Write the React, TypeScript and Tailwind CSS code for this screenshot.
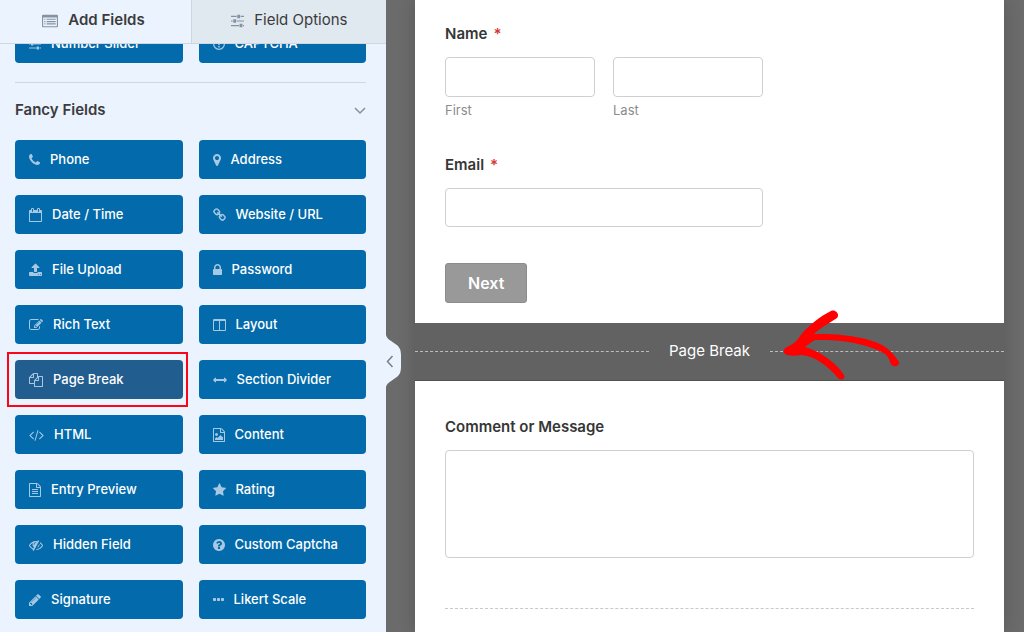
import React from "react";

type Glyph = { d: string; advance: number };

const DOT = "v192q0 40-28 68t-68 28h-192q-40 0-68-28t-28-68v-192q0-40 28-68t68-28h192q40 0 68 28t28 68z";

const glyphs = {
  phone: {
    advance: 1408,
    d: "M1600 1240q0 27-10 70.5t-21 68.5q-21 50-122 106-94 51-186 51-27 0-53-3.5t-57.5-12.5-47-14.5-55.5-20.5-49-18q-98-35-175-83-127-79-264-216t-216-264q-48-77-83-175-3-9-18-49t-20.5-55.5-14.5-47-12.5-57.5-3.5-53q0-92 51-186 56-101 106-122 25-11 68.5-21t70.5-10q14 0 21 3 18 6 53 76 11 19 30 54t35 63.5 31 53.5q3 4 17.5 25t21.5 35.5 7 28.5q0 20-28.5 50t-62 55-62 53-28.5 46q0 9 5 22.5t8.5 20.5 14 24 11.5 19q76 137 174 235t235 174q2 1 19 11.5t24 14 20.5 8.5 22.5 5q18 0 46-28.5t53-62 55-62 50-28.5q14 0 28.5 7t35.5 21.5 25 17.5q25 15 53.5 31t63.5 35 54 30q70 35 76 53 3 7 3 21z",
  },
  marker: {
    advance: 1024,
    d: "M1152 640q0-106-75-181t-181-75-181 75-75 181 75 181 181 75 181-75 75-181zm256 0q0 109-33 179l-364 774q-16 33-47.5 52t-67.5 19-67.5-19-46.5-52l-365-774q-33-70-33-179 0-212 150-362t362-150 362 150 150 362z",
  },
  calendar: {
    advance: 1664,
    d: "M192 1664h1408v-1024h-1408v1024zm384-1216v-288q0-14-9-23t-23-9h-64q-14 0-23 9t-9 23v288q0 14 9 23t23 9h64q14 0 23-9t9-23zm768 0v-288q0-14-9-23t-23-9h-64q-14 0-23 9t-9 23v288q0 14 9 23t23 9h64q14 0 23-9t9-23zm384-64v1280q0 52-38 90t-90 38h-1408q-52 0-90-38t-38-90v-1280q0-52 38-90t90-38h128v-96q0-66 47-113t113-47h64q66 0 113 47t47 113v96h384v-96q0-66 47-113t113-47h64q66 0 113 47t47 113v96h128q52 0 90 38t38 90z",
  },
  link: {
    advance: 1664,
    d: "M1520 1216q0-40-28-68l-208-208q-28-28-68-28-42 0-72 32 3 3 19 18.5t21.5 21.5 15 19 13 25.5 3.5 27.5q0 40-28 68t-68 28q-15 0-27.5-3.5t-25.5-13-19-15-21.5-21.5-18.5-19q-33 31-33 73 0 40 28 68l206 207q27 27 68 27 40 0 68-26l147-146q28-28 28-67zm-703-705q0-40-28-68l-206-207q-28-28-68-28-39 0-68 27l-147 146q-28 28-28 67 0 40 28 68l208 208q27 27 68 27 42 0 72-31-3-3-19-18.5t-21.5-21.5-15-19-13-25.5-3.5-27.5q0-40 28-68t68-28q15 0 27.5 3.5t25.5 13 19 15 21.5 21.5 18.5 19q33-31 33-73zm895 705q0 120-85 203l-147 146q-83 83-203 83-121 0-204-85l-206-207q-83-83-83-203 0-123 88-209l-88-88q-86 88-208 88-120 0-204-84l-208-208q-84-84-84-204t85-203l147-146q83-83 203-83 121 0 204 85l206 207q83 83 83 203 0 123-88 209l88 88q86-88 208-88 120 0 204 84l208 208q84 84 84 204z",
  },
  upload: {
    advance: 1664,
    d: "M1344 1472q0-26-19-45t-45-19-45 19-19 45 19 45 45 19 45-19 19-45zm256 0q0-26-19-45t-45-19-45 19-19 45 19 45 45 19 45-19 19-45zm128-224v320q0 40-28 68t-68 28h-1472q-40 0-68-28t-28-68v-320q0-40 28-68t68-28h427q21 56 70.5 92t110.5 36h256q61 0 110.5-36t70.5-92h427q40 0 68 28t28 68zm-325-648q-17 40-59 40h-256v448q0 26-19 45t-45 19h-256q-26 0-45-19t-19-45v-448h-256q-42 0-59-40-17-39 14-69l448-448q18-19 45-19t45 19l448 448q31 30 14 69z",
  },
  lock: {
    advance: 1152,
    d: "M640 768h512v-192q0-106-75-181t-181-75-181 75-75 181v192zm832 96v576q0 40-28 68t-68 28h-960q-40 0-68-28t-28-68v-576q0-40 28-68t68-28h32v-192q0-184 132-316t316-132 316 132 132 316v192h32q40 0 68 28t28 68z",
  },
  edit: {
    advance: 1792,
    d: "M888 1184l116-116-152-152-116 116v56h96v96h56zm440-720q-16-16-33 1l-350 350q-17 17-1 33t33-1l350-350q17-17 1-33zm80 594v190q0 119-84.5 203.5t-203.5 84.5h-832q-119 0-203.5-84.5t-84.5-203.5v-832q0-119 84.5-203.5t203.5-84.5h832q63 0 117 25 15 7 18 23 3 17-9 29l-49 49q-14 14-32 8-23-6-45-6h-832q-66 0-113 47t-47 113v832q0 66 47 113t113 47h832q66 0 113-47t47-113v-126q0-13 9-22l64-64q15-15 35-7t20 29zm-96-738l288 288-672 672h-288v-288zm444 132l-92 92-288-288 92-92q28-28 68-28t68 28l152 152q28 28 28 68t-28 68z",
  },
  columns: {
    advance: 1664,
    d: "M224 1536h608v-1152h-640v1120q0 13 9.5 22.5t22.5 9.5zm1376-32v-1120h-640v1152h608q13 0 22.5-9.5t9.5-22.5zm128-1216v1216q0 66-47 113t-113 47h-1344q-66 0-113-47t-47-113v-1216q0-66 47-113t113-47h1344q66 0 113 47t47 113z",
  },
  files: {
    advance: 1792,
    d: "M1696 384q40 0 68 28t28 68v1216q0 40-28 68t-68 28h-960q-40 0-68-28t-28-68v-288h-544q-40 0-68-28t-28-68v-672q0-40 20-88t48-76l408-408q28-28 76-48t88-20h416q40 0 68 28t28 68v328q68-40 128-40h416zm-544 213l-299 299h299v-299zm-640-384l-299 299h299v-299zm196 647l316-316v-416h-384v416q0 40-28 68t-68 28h-416v640h512v-256q0-40 20-88t48-76zm956 804v-1152h-384v416q0 40-28 68t-68 28h-416v640h896z",
  },
  arrows: {
    advance: 1792,
    d: "M1792 896q0 26-19 45l-256 256q-19 19-45 19t-45-19-19-45v-128h-1024v128q0 26-19 45t-45 19-45-19l-256-256q-19-19-19-45t19-45l256-256q19-19 45-19t45 19 19 45v128h1024v-128q0-26 19-45t45-19 45 19l256 256q19 19 19 45z",
  },
  code: {
    advance: 1920,
    d: "M553 1399l-50 50q-10 10-23 10t-23-10l-466-466q-10-10-10-23t10-23l466-466q10-10 23-10t23 10l50 50q10 10 10 23t-10 23l-393 393 393 393q10 10 10 23t-10 23zm591-1067l-373 1291q-4 13-15.5 19.5t-23.5 2.5l-62-17q-13-4-19.5-15.5t-2.5-24.5l373-1291q4-13 15.5-19.5t23.5-2.5l62 17q13 4 19.5 15.5t2.5 24.5zm657 651l-466 466q-10 10-23 10t-23-10l-50-50q-10-10-10-23t10-23l393-393-393-393q-10-10-10-23t10-23l50-50q10-10 23-10t23 10l466 466q10 10 10 23t-10 23z",
  },
  image: {
    advance: 1536,
    d: "M1596 380q28 28 48 76t20 88v1152q0 40-28 68t-68 28h-1344q-40 0-68-28t-28-68v-1600q0-40 28-68t68-28h896q40 0 88 20t76 48zm-444-244v376h376q-10-29-22-41l-313-313q-12-12-41-22zm384 1528v-1024h-416q-40 0-68-28t-28-68v-416h-768v1536h1280zm-128-448v320h-1024v-192l192-192 128 128 384-384zm-832-192q-80 0-136-56t-56-136 56-136 136-56 136 56 56 136-56 136-136 56z",
  },
  text: {
    advance: 1536,
    d: "M1596 380q28 28 48 76t20 88v1152q0 40-28 68t-68 28h-1344q-40 0-68-28t-28-68v-1600q0-40 28-68t68-28h896q40 0 88 20t76 48zm-444-244v376h376q-10-29-22-41l-313-313q-12-12-41-22zm384 1528v-1024h-416q-40 0-68-28t-28-68v-416h-768v1536h1280zm-1024-864q0-14 9-23t23-9h704q14 0 23 9t9 23v64q0 14-9 23t-23 9h-704q-14 0-23-9t-9-23v-64zm736 224q14 0 23 9t9 23v64q0 14-9 23t-23 9h-704q-14 0-23-9t-9-23v-64q0-14 9-23t23-9h704zm0 256q14 0 23 9t9 23v64q0 14-9 23t-23 9h-704q-14 0-23-9t-9-23v-64q0-14 9-23t23-9h704z",
  },
  star: {
    advance: 1664,
    d: "M1728 647q0 22-26 48l-363 354 86 500q1 7 1 20 0 21-10.5 35.5t-30.5 14.5q-19 0-40-12l-449-236-449 236q-22 12-40 12-21 0-31.5-14.5t-10.5-35.5q0-6 2-20l86-500-364-354q-25-27-25-48 0-37 56-46l502-73 225-455q19-41 49-41t49 41l225 455 502 73q56 9 56 46z",
  },
  hidden: {
    advance: 1792,
    d: "M555 1335l78-141q-87-63-136-159t-49-203q0-121 61-225-229 117-381 353 167 258 427 375zm389-759q0-20-14-34t-34-14q-125 0-214.5 89.5t-89.5 214.5q0 20 14 34t34 14 34-14 14-34q0-86 61-147t147-61q20 0 34-14t14-34zm363-191q0 7-1 9-106 189-316 567t-315 566l-49 89q-10 16-28 16-12 0-134-70-16-10-16-28 0-12 44-87-143-65-263.5-173t-208.5-245q-20-31-20-69t20-69q153-235 380-371t496-136q89 0 180 17l54-97q10-16 28-16 5 0 18 6t31 15.5 33 18.5 31.5 18.5 19.5 11.5q16 10 16 27zm37 447q0 139-79 253.5t-209 164.5l280-502q8 45 8 84zm448 128q0 35-20 69-39 64-109 145-150 172-347.5 267t-419.5 95l74-132q212-18 392.5-137t301.5-307q-115-179-282-294l63-112q95 64 182.5 153t144.5 184q20 34 20 69z",
  },
  question: {
    advance: 1536,
    d: "M1024 1376v-192q0-14-9-23t-23-9h-192q-14 0-23 9t-9 23v192q0 14 9 23t23 9h192q14 0 23-9t9-23zm256-672q0-88-55.5-163t-138.5-116-170-41q-243 0-371 213-15 24 8 42l132 100q7 6 19 6 16 0 25-12 53-68 86-92 34-24 86-24 48 0 85.5 26t37.5 59q0 38-20 61t-68 45q-63 28-115.5 86.5t-52.5 125.5v36q0 14 9 23t23 9h192q14 0 23-9t9-23q0-19 21.5-49.5t54.5-49.5q32-18 49-28.5t46-35 44.5-48 28-60.5 12.5-81zm384 192q0 209-103 385.5t-279.5 279.5-385.5 103-385.5-103-279.5-279.5-103-385.5 103-385.5 279.5-279.5 385.5-103 385.5 103 279.5 279.5 103 385.5z",
  },
  questionOutline: {
    advance: 1536,
    d: "M896 128a768 768 0 1 0 0 1536 768 768 0 1 0 0-1536zm0 160a608 608 0 1 1 0 1216 608 608 0 1 1 0-1216zM800 1150h192v192h-192zM800 1050v-120q10-80 110-130 70-40 70-90 0-60-84-60-70 0-120 80l-130-100q90-150 260-150 260 20 260 220 0 120-120 190-66 40-66 100v60z",
  },
  pencil: {
    advance: 1536,
    d: "M491 1536l91-91-235-235-91 91v107h128v128h107zm523-928q0-22-22-22-10 0-17 7l-542 542q-7 7-7 17 0 22 22 22 10 0 17-7l542-542q7-7 7-17zm-54-192l416 416-832 832h-416v-416zm683 96q0 53-37 90l-166 166-416-416 166-165q36-38 90-38 53 0 91 38l235 234q37 39 37 91z",
  },
  dots: {
    advance: 1408,
    d: `M576 736${DOT}M1088 736${DOT}M1600 736${DOT}`,
  },
  sliders: {
    advance: 1536,
    d: "M128 320h640v128h-640zM1216 320h448v128h-448zM832 192h320v384h-320zM128 832h192v128h-192zM768 832h896v128h-896zM384 704h320v384h-320zM128 1344h896v128h-896zM1472 1344h192v128h-192zM1088 1216h320v384h-320z",
  },
  list: {
    advance: 1792,
    d: "M128 192h1536q128 0 128 128v1152q0 128-128 128h-1536q-128 0-128-128v-1152q0-128 128-128zM128 512v928q0 32 32 32h1472q32 0 32-32v-928zM256 640h128v128h-128zM512 640h1024v128h-1024zM256 896h128v128h-128zM512 896h1024v128h-1024zM256 1152h128v128h-128zM512 1152h1024v128h-1024z",
  },
} satisfies Record<string, Glyph>;

type IconName = keyof typeof glyphs;

function Icon({ name, size = 14, className = "" }: { name: IconName; size?: number; className?: string }) {
  const { d, advance } = glyphs[name];
  return (
    <svg
      aria-hidden="true"
      className={`shrink-0 ${className}`}
      width={(size * advance) / 1792}
      height={size}
      viewBox={`${(1792 - advance) / 2} 0 ${advance} 1792`}
      fill="currentColor"
      fillRule="evenodd"
    >
      <path d={d} />
    </svg>
  );
}

const fancyFields: { icon: IconName; label: string }[] = [
  { icon: "phone", label: "Phone" },
  { icon: "marker", label: "Address" },
  { icon: "calendar", label: "Date / Time" },
  { icon: "link", label: "Website / URL" },
  { icon: "upload", label: "File Upload" },
  { icon: "lock", label: "Password" },
  { icon: "edit", label: "Rich Text" },
  { icon: "columns", label: "Layout" },
  { icon: "files", label: "Page Break" },
  { icon: "arrows", label: "Section Divider" },
  { icon: "code", label: "HTML" },
  { icon: "image", label: "Content" },
  { icon: "text", label: "Entry Preview" },
  { icon: "star", label: "Rating" },
  { icon: "hidden", label: "Hidden Field" },
  { icon: "question", label: "Custom Captcha" },
  { icon: "pencil", label: "Signature" },
  { icon: "dots", label: "Likert Scale" },
];

function FieldButton({ icon, label, active = false }: { icon: IconName; label: string; active?: boolean }) {
  return (
    <div className="relative">
      <button
        type="button"
        className={`flex h-[39px] w-full items-center gap-[10px] rounded px-[14px] text-[13px] font-medium text-white ${
          active ? "bg-[#215d8f]" : "bg-[#036aab]"
        }`}
      >
        <Icon name={icon} className="text-[#a6c8e2]" />
        {label}
      </button>
      {active && <span className="pointer-events-none absolute -top-2 -right-[5px] -bottom-2 -left-2 border-2 border-[#fb0519]" />}
    </div>
  );
}

function Sidebar() {
  return (
    <aside className="relative z-10 w-[386px] shrink-0 bg-[#ebf3fe]">
      <nav className="flex h-11 border-b border-[#ced7e0] text-[15px] text-[#3b3b3d]">
        <button type="button" className="flex w-[191px] items-center justify-center gap-[10px] pr-1 pb-[2px] font-semibold">
          <Icon name="list" size={16} className="text-[#8592a1]" />
          Add Fields
        </button>
        <button
          type="button"
          className="flex flex-1 items-center justify-center gap-[10px] border-l border-[#ced7e0] bg-[#e0e8f0] pb-[2px]"
        >
          <Icon name="sliders" size={16} className="text-[#8592a1]" />
          Field Options
        </button>
      </nav>
      <div className="pr-5 pl-[15px]">
        <div className="flex h-[19px] flex-col justify-end overflow-hidden">
          <div className="grid grid-cols-2 gap-4">
            <FieldButton icon="sliders" label="Number Slider" />
            <FieldButton icon="questionOutline" label="CAPTCHA" />
          </div>
        </div>
        <section className="mt-[19px] border-t border-[#cfd8e2]">
          <h2>
            <button type="button" className="flex h-[57px] w-full items-center justify-between pb-[2px] text-[15px] font-semibold text-[#3b3b3d]">
              Fancy Fields
              <svg width="12" height="12" viewBox="0 0 12 12" fill="none" stroke="#86919e" strokeWidth="1.5" aria-hidden="true">
                <path d="M1 3l5 5 5-5" />
              </svg>
            </button>
          </h2>
          <div className="grid grid-cols-2 gap-4">
            {fancyFields.map((field) => (
              <FieldButton key={field.label} {...field} active={field.label === "Page Break"} />
            ))}
          </div>
        </section>
      </div>
      <button type="button" aria-label="Collapse sidebar" className="absolute top-[334px] left-full h-[54px] w-[15px]">
        <svg width="15" height="54" viewBox="0 0 15 54" aria-hidden="true">
          <path d="M0 0v1c1 4 4 5 8 8 5 3 7 6 7 12v12c0 6-2 9-7 12-4 3-7 4-8 8v1z" fill="#ebf3fe" />
          <path d="M6.500 22l-5 5.500 5 5.500" fill="none" stroke="#77818c" strokeWidth="1.500" />
        </svg>
      </button>
    </aside>
  );
}

const inputStyle = "block w-full rounded border border-[#cfcfcf] bg-white px-2";
const labelStyle = "block text-[15px] leading-5 font-semibold text-[#363636]";

function Required() {
  return <span className="ml-[6px] text-[#d63638]">*</span>;
}

function Preview() {
  return (
    <main className="flex min-w-0 flex-1 bg-[#6b6b6b] pr-5 pl-[29px]">
      <form className="flex flex-1 flex-col bg-white shadow-[0_0_16px_rgba(0,0,0,0.18)]">
        <section className="px-[30px] pt-6 pb-5">
          <div className="max-w-[318px]">
            <fieldset>
              <legend className={labelStyle}>
                Name
                <Required />
              </legend>
              <div className="mt-[13px] grid grid-cols-2 gap-[18px]">
                <div>
                  <input id="first" className={`${inputStyle} h-10`} />
                  <label htmlFor="first" className="mt-1 block text-[13px] leading-[18px] text-[#8c8c8c]">
                    First
                  </label>
                </div>
                <div>
                  <input id="last" className={`${inputStyle} h-10`} />
                  <label htmlFor="last" className="mt-1 block text-[13px] leading-[18px] text-[#8c8c8c]">
                    Last
                  </label>
                </div>
              </div>
            </fieldset>
            <label htmlFor="email" className={`${labelStyle} mt-9`}>
              Email
              <Required />
            </label>
            <input id="email" type="email" className={`${inputStyle} mt-[13px] h-[39px]`} />
          </div>
          <button type="button" className="mt-9 h-10 rounded-[3px] border border-[#8c8c8c] bg-[#999999] px-[22px] text-base font-semibold text-white">
            Next
          </button>
        </section>
        <div className="relative flex h-[58px] items-center gap-5 border-b border-[#505050] bg-[#626262] text-[15px] text-white">
          <span className="flex-1 border-t border-dashed border-[#bcbcbc]" />
          Page Break
          <span className="flex-1 border-t border-dashed border-[#bcbcbc]" />
          <svg className="absolute -top-[13px] right-[104px]" width="118" height="70" viewBox="782 310 118 70" aria-hidden="true">
            <path
              d="M831 311C836 309 840 315 837 318C829 323 819 329 814 334C845 333 877 339 888 349C893 353 896 358 899 362C900 366 893 368 891 364C889 360 889 357 885 354C872 345 843 339 815 340C811 342 808 345 805 347C822 352 836 363 844 375C846 379 841 381 838 378C828 366 815 356 801 355C795 356 788 356 785 354C782 351 784 348 789 346C793 344 797 341 800 336C807 327 820 316 831 311Z"
              fill="#fe0000"
            />
          </svg>
        </div>
        <section className="flex-1 px-[30px] pt-9">
          <label htmlFor="message" className={labelStyle}>
            Comment or Message
          </label>
          <textarea id="message" className={`${inputStyle} mt-[13px] h-[108px] resize-none`} />
          <hr className="mt-[50px] border-t border-dashed border-[#c8c8c8]" />
        </section>
      </form>
    </main>
  );
}

export default function App() {
  return (
    <div className="flex min-h-screen overflow-hidden font-['Inter',sans-serif]">
      <Sidebar />
      <Preview />
    </div>
  );
}
